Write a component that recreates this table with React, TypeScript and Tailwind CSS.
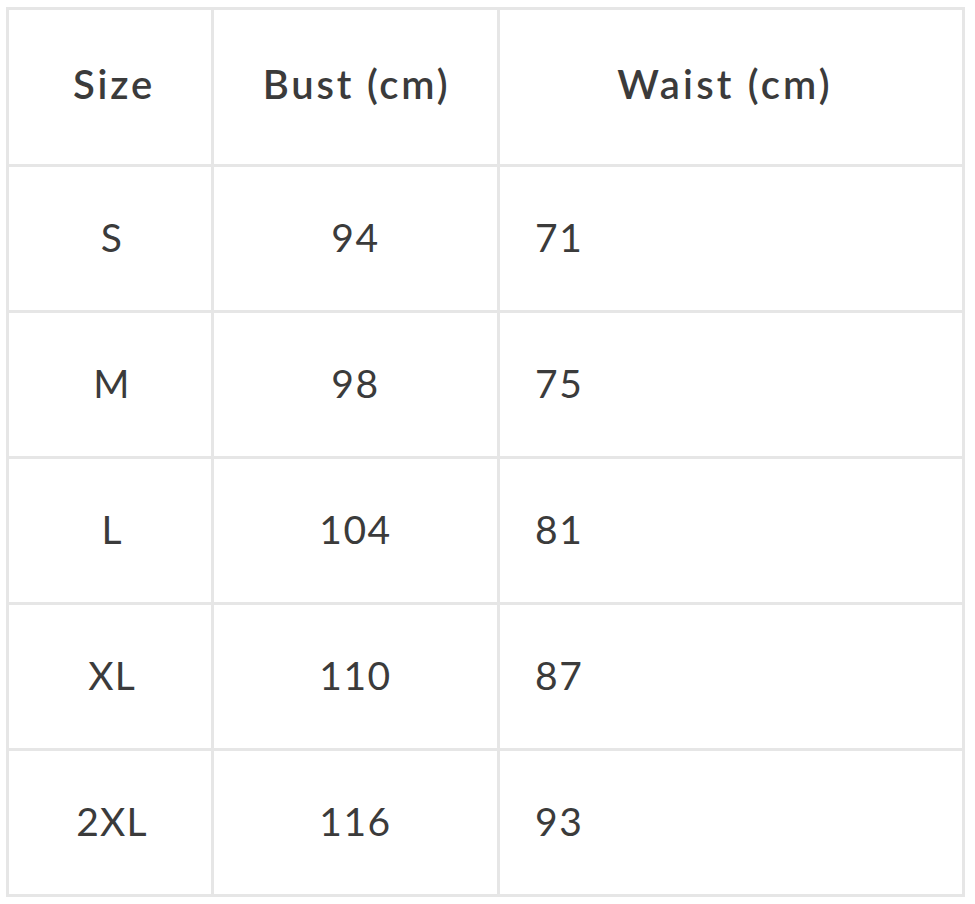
import { Fragment } from "react";

const rows = [
  { size: "S", bust: "94", waist: "71" },
  { size: "M", bust: "98", waist: "75" },
  { size: "L", bust: "104", waist: "81" },
  { size: "XL", bust: "110", waist: "87" },
  { size: "2XL", bust: "116", waist: "93" },
];

export default function App() {
  return (
    <div className="min-h-[904px] bg-white pl-[6px] pt-[7px] font-['Lato','Liberation_Sans',sans-serif] text-[#3b3b3b]">
      <div className="grid w-[959px] grid-cols-[202px_283px_462px] grid-rows-[154px_repeat(5,143px)] gap-[3px] bg-[#e6e6e6] p-[3px]">
        <div className="flex items-center justify-center bg-white pb-[6px] pl-[8px] text-[40px] font-semibold tracking-[0.07em]">
          Size
        </div>
        <div className="flex items-center justify-center bg-white pb-[6px] pl-[2px] text-[40px] font-semibold tracking-[0.07em]">
          Bust (cm)
        </div>
        <div className="flex items-center justify-center bg-white pb-[6px] pr-[12px] text-[40px] font-semibold tracking-[0.08em]">
          Waist (cm)
        </div>
        {rows.map((row) => (
          <Fragment key={row.size}>
            <div className="flex items-center justify-center bg-white pb-[2px] pl-[4px] text-[39px] tracking-[0.03em]">
              {row.size}
            </div>
            <div className="flex items-center justify-center bg-white pb-[2px] text-[39px] tracking-[0.04em]">
              {row.bust}
            </div>
            <div className="flex items-center bg-white pb-[2px] pl-[35px] text-[39px] tracking-[0.04em]">
              {row.waist}
            </div>
          </Fragment>
        ))}
      </div>
    </div>
  );
}
